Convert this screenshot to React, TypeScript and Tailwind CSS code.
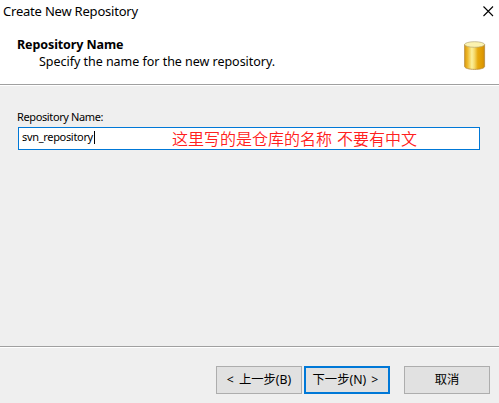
import React from "react";

function CloseIcon() {
  return (
    <svg width="11" height="11" viewBox="0 0 11 11" className="block">
      <path d="M0.5 0.5L10 10M10 0.5L0.5 10" stroke="#000" strokeWidth="1.1" fill="none" />
    </svg>
  );
}

function DatabaseIcon() {
  return (
    <svg width="22" height="29" viewBox="0 0 22 29" className="block">
      <defs>
        <linearGradient id="side" x1="0" x2="1" y1="0" y2="0">
          <stop offset="0" stopColor="#d99a10" />
          <stop offset="0.14" stopColor="#edb728" />
          <stop offset="0.36" stopColor="#fbf09c" />
          <stop offset="0.48" stopColor="#f6dc70" />
          <stop offset="0.66" stopColor="#e6a90f" />
          <stop offset="0.88" stopColor="#e09a00" />
          <stop offset="1" stopColor="#c98a10" />
        </linearGradient>
      </defs>
      <path d="M0.600 3.500v22c0 1.700 4.500 2.900 10 2.900s10-1.200 10-2.900V3.500z" fill="url(#side)" stroke="#b58a3c" strokeWidth="0.800" />
      <ellipse cx="10.600" cy="3.500" rx="10" ry="2.800" fill="#fbf2b0" stroke="#b5a878" strokeWidth="0.700" />
    </svg>
  );
}

function DialogButton({ label, primary, className }: { label: string; primary?: boolean; className?: string }) {
  return (
    <button
      type="button"
      className={`flex h-7 w-[86px] items-center justify-center whitespace-pre bg-[#e1e1e1] text-[12.300px] leading-none [word-spacing:2px] ${
        primary ? "border-2 border-[#0078d7] pr-[3px]" : "border border-[#adadad]"
      } ${className ?? ""}`}
    >
      {label}
    </button>
  );
}

export default function App() {
  return (
    <div className="flex h-[403px] w-[499px] flex-col overflow-hidden bg-[#efefef] font-['Noto_Sans','Noto_Sans_CJK_SC',sans-serif] text-black">
      <header className="h-[85px] shrink-0 border-b border-[#a0a0a0] bg-white">
        <div className="flex h-[22px] items-center justify-between pl-[3px] pr-[5px]">
          <span className="text-[13px] leading-5 tracking-[-0.21px]">Create New Repository</span>
          <CloseIcon />
        </div>
        <div className="flex justify-between pl-[17px] pr-[13px] pt-[14px]">
          <div>
            <h1 className="text-[12.500px] font-bold leading-[17px] tracking-[-0.1px]">Repository Name</h1>
            <p className="pl-[22px] text-[12.500px] leading-[17px] tracking-[-0.03px]">Specify the name for the new repository.</p>
          </div>
          <div className="pt-[5px]">
            <DatabaseIcon />
          </div>
        </div>
      </header>
      <main className="h-[261px] shrink-0 border-t border-white pl-[18px] pr-[19px] pt-[23px]">
        <label className="-ml-px block h-[18px] text-[11px] leading-4 tracking-[-0.38px]">Repository Name:</label>
        <div className="flex h-[23px] w-[462px] items-center border border-[#0078d7] bg-white pl-[3px]">
          <span className="w-[72px] whitespace-nowrap pb-[5px] text-[11px] leading-none tracking-[-0.32px]">svn_repository</span>
          <span className="mb-0.5 h-[13px] w-px bg-black" />
          <span className="ml-[77px] whitespace-pre pb-px font-['Noto_Sans_CJK_SC',sans-serif] text-base font-[350] leading-none text-[#ff2020] [word-spacing:1.500px]">
            这里写的是仓库的名称 不要有中文
          </span>
        </div>
      </main>
      <footer className="flex grow items-start border-t border-[#a0a0a0] pl-[216px] pt-[19px] shadow-[inset_0_1px_0_#fff]">
        <DialogButton label="< 上一步(B)" />
        <DialogButton label="下一步(N) >" primary className="ml-0.5" />
        <DialogButton label="取消" className="ml-[14px]" />
      </footer>
    </div>
  );
}
